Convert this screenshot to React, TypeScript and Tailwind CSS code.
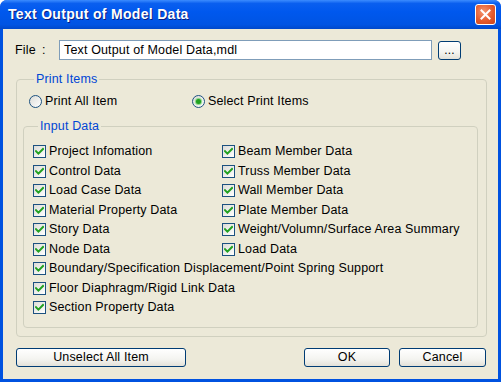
import React from "react";

function Check() {
  return (
    <span className="relative inline-flex w-[13px] h-[13px] shrink-0 border border-[#1C5180] bg-[linear-gradient(135deg,#DCDCD7_0%,#FFFFFF_100%)] items-center justify-center">
      <svg width="9" height="9" viewBox="0 0 9 9">
        <path d="M1 4.2 L3.4 6.6 L8 2" fill="none" stroke="#21A121" strokeWidth="2" strokeLinecap="square" />
      </svg>
    </span>
  );
}

function Radio({ on }: { on?: boolean }) {
  return (
    <span className="inline-flex w-[13px] h-[13px] shrink-0 rounded-full border border-[#1C5180] bg-[linear-gradient(135deg,#DCDCD7_0%,#FFFFFF_100%)] items-center justify-center">
      {on && <span className="w-[5px] h-[5px] rounded-full bg-[#21A121] shadow-[0_0_1px_1px_#7ED37E]" />}
    </span>
  );
}

function Item({ label }: { label: string }) {
  return (
    <div className="flex items-center h-[19.5px] gap-[3px] whitespace-nowrap">
      <Check />
      <span>{label}</span>
    </div>
  );
}

function Btn({ label, w }: { label: string; w: string }) {
  return (
    <button
      className={`${w} h-[19px] rounded-[3px] border border-[#003C74] bg-[linear-gradient(180deg,#FFFFFF_0%,#F4F4F0_60%,#E3E1D8_100%)] text-[12.5px] tracking-[0.15px] leading-none text-black flex items-center justify-center`}
    >
      {label}
    </button>
  );
}

export default function App() {
  return (
    <div
      className="w-[501px] h-[382px] flex flex-col bg-[#0052E0] rounded-t-[7px] overflow-hidden text-[12.5px] tracking-[0.15px] text-black"
      style={{ fontFamily: '"Liberation Sans", Arial, sans-serif' }}
    >
      {/* title bar */}
      <div className="h-[29px] shrink-0 flex items-center justify-between pl-[8px] pr-[5px] bg-[linear-gradient(180deg,#3C8CFF_0%,#0A5FEF_12%,#0058EE_40%,#0054E3_85%,#0048CA_100%)]">
        <span className="text-white font-bold text-[14px] tracking-[0.3px] [text-shadow:1px_1px_0_#0A1E80]">
          Text Output of Model Data
        </span>
        <span className="w-[21px] h-[21px] rounded-[3px] border border-white bg-[radial-gradient(circle_at_40%_35%,#F49670_0%,#E45A2E_55%,#CC4418_100%)] flex items-center justify-center">
          <svg width="11" height="11" viewBox="0 0 11 11">
            <path d="M1.5 1.5 L9.5 9.5 M9.5 1.5 L1.5 9.5" stroke="white" strokeWidth="2" strokeLinecap="square" />
          </svg>
        </span>
      </div>

      {/* body */}
      <div className="flex-1 mx-[3px] mb-[3px] bg-[#ECE9D8] flex flex-col pt-[11px] pb-[12px]">
        {/* file row */}
        <div className="flex items-center h-[20px] pl-[12px]">
          <span className="w-[27px]">File</span>
          <span className="w-[17px]">:</span>
          <div className="w-[373px] h-[20px] border border-[#7F9DB9] bg-white flex items-center pl-[4px] whitespace-nowrap">
            Text Output of Model Data,mdl
          </div>
          <button className="ml-[6px] w-[23px] h-[19px] rounded-[3px] border border-[#003C74] bg-[linear-gradient(180deg,#FFFFFF_0%,#F4F4F0_60%,#E3E1D8_100%)] flex items-end justify-center pb-[3px] leading-none text-[12px]">
            ...
          </button>
        </div>

        {/* Print Items group */}
        <fieldset className="mt-[12px] ml-[13px] mr-[11px] h-[265px] border border-[#D0D0BF] rounded-[4px] pl-[12px] pr-[8px] pb-[8px]">
          <legend className="ml-[5px] px-[2px] text-[#0046D5] leading-[14px]">Print Items</legend>
          <div className="mt-[8px] h-[14px] flex items-center">
            <div className="flex items-center gap-[3px] w-[163px]">
              <Radio />
              <span>Print All Item</span>
            </div>
            <div className="flex items-center gap-[3px]">
              <Radio on />
              <span>Select Print Items</span>
            </div>
          </div>

          {/* Input Data group */}
          <fieldset className="mt-[11px] ml-[-6px] h-[209px] border border-[#D0D0BF] rounded-[4px] pl-[9px] pr-[8px]">
            <legend className="ml-[5px] px-[2px] text-[#0046D5] leading-[14px]">Input Data</legend>
            <div className="mt-[9px] flex">
              <div className="w-[189px] flex flex-col">
                <Item label="Project Infomation" />
                <Item label="Control Data" />
                <Item label="Load Case Data" />
                <Item label="Material Property Data" />
                <Item label="Story Data" />
                <Item label="Node Data" />
              </div>
              <div className="flex flex-col">
                <Item label="Beam Member Data" />
                <Item label="Truss Member Data" />
                <Item label="Wall Member Data" />
                <Item label="Plate Member Data" />
                <Item label="Weight/Volumn/Surface Area Summary" />
                <Item label="Load Data" />
              </div>
            </div>
            <div className="flex flex-col">
              <Item label="Boundary/Specification Displacement/Point Spring Support" />
              <Item label="Floor Diaphragm/Rigid Link Data" />
              <Item label="Section Property Data" />
            </div>
          </fieldset>
        </fieldset>

        {/* buttons */}
        <div className="mt-[11px] flex items-center pl-[13px] pr-[12px]">
          <Btn label="Unselect All Item" w="w-[170px]" />
          <div className="flex-1" />
          <Btn label="OK" w="w-[86px]" />
          <div className="w-[9px]" />
          <Btn label="Cancel" w="w-[87px]" />
        </div>
      </div>
    </div>
  );
}
